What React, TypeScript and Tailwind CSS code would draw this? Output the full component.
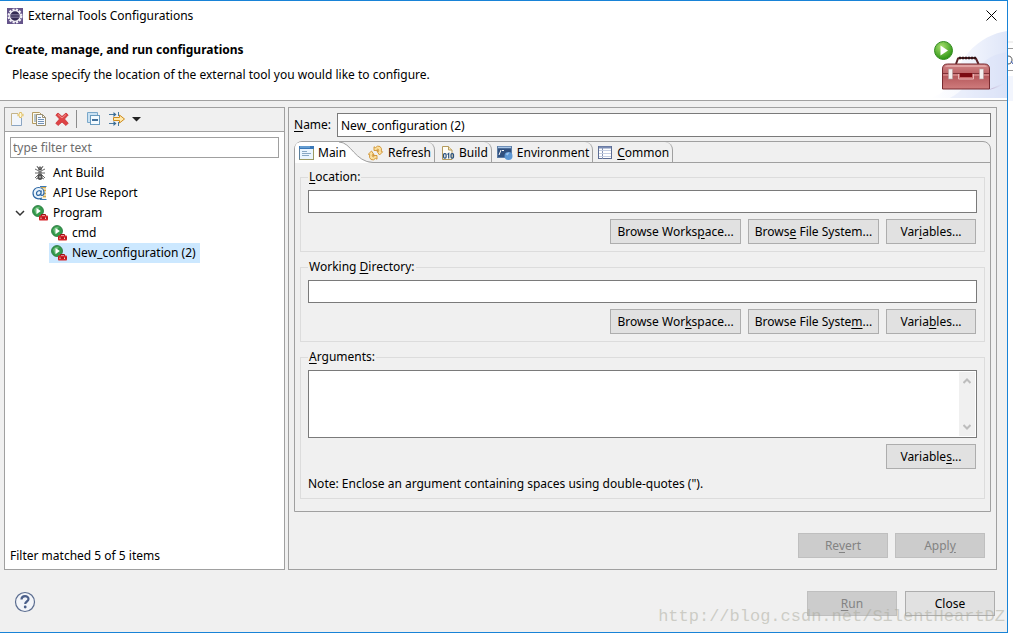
import { useState } from "react";
import type { ReactNode } from "react";

type TreeItem = {
  id: string;
  label: string;
  icon: ReactNode;
  level: number;
  expanded?: boolean;
};

const treeItems: TreeItem[] = [
  { id: "ant", label: "Ant Build", icon: <AntIcon />, level: 0 },
  { id: "api", label: "API Use Report", icon: <ApiIcon />, level: 0 },
  { id: "program", label: "Program", icon: <ProgramIcon />, level: 0, expanded: true },
  { id: "cmd", label: "cmd", icon: <ProgramIcon />, level: 1 },
  { id: "new", label: "New_configuration (2)", icon: <ProgramIcon />, level: 1 },
];

export default function App() {
  return (
    <div className="relative flex min-h-screen bg-white pb-0.5 font-['Noto_Sans','Noto_Sans_CJK_SC',sans-serif] text-[12px] leading-4 text-black">
      <main className="flex min-w-0 flex-1 flex-col border-y border-r border-[#1883d7] bg-[#f0f0f0]">
        <DialogHeader />
        <div className="flex flex-1 gap-[3px] pt-1.5 pr-2.5 pl-1">
          <ConfigurationList />
          <ConfigurationEditor />
        </div>
        <footer className="flex h-[62px] items-start justify-between pt-[21px] pr-3 pl-3.5">
          <button aria-label="Help">
            <HelpIcon />
          </button>
          <div className="flex gap-2">
            <PushButton disabled>
              <Key>R</Key>un
            </PushButton>
            <PushButton>Close</PushButton>
          </div>
        </footer>
      </main>
      <WindowBehind />
      <div className="pointer-events-none absolute right-2 bottom-2 font-['Liberation_Mono',monospace] text-[17px] leading-5 text-[#a8a89a]/50">
        http://blog.csdn.net/SilentHeartDZ
      </div>
    </div>
  );
}

function DialogHeader() {
  return (
    <header className="flex items-stretch justify-between border-b border-[#a0a0a0] bg-white">
      <div>
        <div className="flex items-center gap-[5px] pt-1.5 pl-[7px]">
          <EclipseIcon />
          <span className="pt-px">External Tools Configurations</span>
        </div>
        <h1 className="pt-[18px] pl-[5px] font-bold">Create, manage, and run configurations</h1>
        <p className="pt-[9px] pb-[17px] pl-3">
          Please specify the location of the external tool you would like to configure.
        </p>
      </div>
      <div className="flex flex-col items-end">
        <button aria-label="Close window" className="px-2.5 pt-[9px] pb-2">
          <svg width="11" height="11" viewBox="0 0 11 11" stroke="#000" fill="none">
            <path d="M.5.5l10 10M10.5.5l-10 10" />
          </svg>
        </button>
        <BannerIcon />
      </div>
    </header>
  );
}

function ConfigurationList() {
  const [selected, setSelected] = useState("new");

  return (
    <section className="flex w-[281px] shrink-0 flex-col border border-[#a0a0a0] bg-white">
      <div className="flex h-6 items-center border-b border-[#a0a0a0] bg-[#f0f0f0] pb-px pl-1">
        <button aria-label="New" className="mr-1.5"><NewIcon /></button>
        <button aria-label="Duplicate" className="mr-[7px]"><DuplicateIcon /></button>
        <button aria-label="Delete"><DeleteIcon /></button>
        <span className="mr-[5px] ml-1.5 h-[18px] w-px bg-[#8c8c8c]" />
        <button aria-label="Collapse all" className="mr-1.5 ml-1"><CollapseIcon /></button>
        <button aria-label="Filter" className="mr-1.5"><FilterIcon /></button>
        <button aria-label="Filter menu">
          <svg width="9" height="5" viewBox="0 0 9 5"><path d="M0 0h9L4.500 4.500z" fill="#222" /></svg>
        </button>
      </div>
      <input
        type="text"
        aria-label="Filter"
        placeholder="type filter text"
        className="mx-[5px] mt-[5px] h-[21px] border border-[#a0a0a0] px-0.5 outline-none placeholder:text-[#6d6d6d]"
      />
      <ul role="tree" className="mt-[5px] flex-1">
        {treeItems.map((item) => (
          <li
            key={item.id}
            role="treeitem"
            aria-selected={selected === item.id}
            className={item.level === 0 ? "flex h-5 pl-[9px]" : "flex h-5 pl-7"}
          >
            <span className="flex w-4 items-center">
              {item.expanded && (
                <svg width="12" height="7" viewBox="0 0 12 7" fill="none" stroke="#333" strokeWidth="1.5">
                  <path d="M2 1l4 4 4-4" />
                </svg>
              )}
            </span>
            <button
              onClick={() => setSelected(item.id)}
              className={`flex h-5 items-center gap-[5px] px-0.5 pr-1 ${selected === item.id ? "bg-[#cce8ff]" : ""}`}
            >
              {item.icon}
              {item.label}
            </button>
          </li>
        ))}
      </ul>
      <p className="pb-[5px] pl-[5px]">Filter matched 5 of 5 items</p>
    </section>
  );
}

function ConfigurationEditor() {
  return (
    <section className="flex min-w-0 flex-1 flex-col border border-[#a0a0a0] p-[5px]">
      <div className="flex items-center gap-1">
        <label htmlFor="name" className="w-[39px]">
          <Key>N</Key>ame:
        </label>
        <input
          id="name"
          type="text"
          defaultValue="New_configuration (2)"
          className="h-6 min-w-0 flex-1 border border-[#7a7a7a] bg-white px-[3px] outline-none"
        />
      </div>

      <div className="mt-1 rounded-t-lg border border-[#a0a0a0]">
        <TabStrip />
        <div className="flex flex-col gap-[7px] px-[5px] pt-1.5 pb-3">
          <PathGroup id="location" label={<><Key>L</Key>ocation:</>}>
            <PushButton wide>Browse Works<Key>p</Key>ace...</PushButton>
            <PushButton wide>Brows<Key>e</Key> File System...</PushButton>
            <PushButton>Var<Key>i</Key>ables...</PushButton>
          </PathGroup>
          <PathGroup id="directory" label={<>Working <Key>D</Key>irectory:</>}>
            <PushButton wide>Browse Wor<Key>k</Key>space...</PushButton>
            <PushButton wide>Browse File Syste<Key>m</Key>...</PushButton>
            <PushButton>Varia<Key>b</Key>les...</PushButton>
          </PathGroup>
          <fieldset className="border border-[#dcdcdc] px-[7px] pb-1.5">
            <legend className="px-px">
              <label htmlFor="arguments"><Key>A</Key>rguments:</label>
            </legend>
            <div className="mt-[5px] flex h-[68px] border border-[#7a7a7a] bg-white">
              <textarea id="arguments" className="min-w-0 flex-1 resize-none px-1 outline-none" />
              <div className="my-px mr-px flex w-4 flex-col items-center justify-between bg-[#f0f0f0] py-1.5">
                <svg width="8" height="6" viewBox="0 0 8 6" fill="none" stroke="#bdbdbd" strokeWidth="2">
                  <path d="M.5 5L4 1.500 7.500 5" />
                </svg>
                <svg width="8" height="6" viewBox="0 0 8 6" fill="none" stroke="#bdbdbd" strokeWidth="2">
                  <path d="M.5 1L4 4.500 7.500 1" />
                </svg>
              </div>
            </div>
            <div className="mt-1.5 flex justify-end pr-px">
              <PushButton>Variable<Key>s</Key>...</PushButton>
            </div>
            <p className="mt-[7px]">Note: Enclose an argument containing spaces using double-quotes (&quot;).</p>
          </fieldset>
        </div>
      </div>

      <div className="mt-auto flex justify-end gap-[7px] pr-1.5 pb-1.5">
        <PushButton disabled>Re<Key>v</Key>ert</PushButton>
        <PushButton disabled>Appl<Key>y</Key></PushButton>
      </div>
    </section>
  );
}

function TabStrip() {
  return (
    <div role="tablist" className="flex h-[21px]">
      <button role="tab" aria-selected="true" className="relative z-10 flex w-[73px] shrink-0 items-center gap-[3px] pl-1">
        <svg className="pointer-events-none absolute top-0 left-0" width="84" height="21" viewBox="0 0 84 21">
          <path d="M0 21V6Q0 0 7 0H44C56 0 60 20 77 20.500H84V21z" fill="#fff" />
          <path d="M44 0C56 0 60 20 78 20.500H84" fill="none" stroke="#a0a0a0" />
        </svg>
        <span className="relative"><MainIcon /></span>
        <span className="relative">Main</span>
      </button>
      <div className="flex flex-1 border-b border-[#a0a0a0]">
        <Tab icon={<RefreshIcon />}>Refresh</Tab>
        <Tab icon={<BuildIcon />} inset>Build</Tab>
        <Tab icon={<EnvironmentIcon />} inset>Environment</Tab>
        <Tab icon={<CommonIcon />} inset><Key>C</Key>ommon</Tab>
      </div>
    </div>
  );
}

function Tab({ icon, inset, children }: { icon: ReactNode; inset?: boolean; children: ReactNode }) {
  return (
    <button
      role="tab"
      aria-selected="false"
      className={`flex items-center gap-1 rounded-tr-lg border-r border-[#a0a0a0] pt-px pr-[3px] ${inset ? "pl-[5px]" : ""}`}
    >
      {icon}
      <span>{children}</span>
    </button>
  );
}

function PathGroup({ id, label, children }: { id: string; label: ReactNode; children: ReactNode }) {
  return (
    <fieldset className="min-w-0 border border-[#dcdcdc] px-[7px] pb-[7px]">
      <legend className="px-px">
        <label htmlFor={id}>{label}</label>
      </legend>
      <input
        id={id}
        type="text"
        className="mt-[5px] block h-[23px] w-full border border-[#7a7a7a] bg-white px-1 outline-none"
      />
      <div className="mt-1.5 flex justify-end gap-[7px] pr-px">{children}</div>
    </fieldset>
  );
}

function PushButton({ disabled, wide, children }: { disabled?: boolean; wide?: boolean; children: ReactNode }) {
  return (
    <button
      disabled={disabled}
      className={`h-[25px] border whitespace-nowrap ${wide ? "w-[131px]" : "w-[90px]"} ${
        disabled ? "border-[#bfbfbf] bg-[#cccccc] text-[#838383]" : "border-[#adadad] bg-[#e1e1e1]"
      }`}
    >
      {children}
    </button>
  );
}

// Mnemonic letter
function Key({ children }: { children: ReactNode }) {
  return <u className="underline-offset-2">{children}</u>;
}

// Sliver of the workbench window to the right of the dialog
function WindowBehind() {
  return (
    <div className="w-[5px] shrink-0 overflow-hidden pt-[41px]">
      <div className="h-[7px] border-t-2 border-[#f0f0f0]" />
      <div className="h-[23px] border-y border-[#9a9a9a] pt-1.5">
        <svg width="5" height="10" viewBox="0 0 5 10" fill="none">
          <path d="M0 1c3 0 4 2 4 4s-1 4-4 4" stroke="#555" />
          <path d="M3 6l2 3" stroke="#4263b8" />
        </svg>
      </div>
      <div className="mt-[5px] h-[25px] bg-[#f2f5fd]" />
    </div>
  );
}

function EclipseIcon() {
  return (
    <svg width="16" height="16" viewBox="0 0 16 16">
      <rect width="16" height="16" fill="#64548a" />
      <circle cx="8" cy="8" r="6.300" fill="none" stroke="#f3f1f7" strokeWidth="2.400" strokeDasharray="2.100 1.200" />
      <circle cx="8" cy="8" r="5.300" fill="#332b54" stroke="#f3f1f7" strokeWidth="1.200" />
      <path d="M3.500 6.500h9M3 8h10M3.500 9.500h9" stroke="#8a83a4" strokeWidth=".7" />
    </svg>
  );
}

function BannerIcon() {
  return (
    <svg width="77" height="69" viewBox="0 0 77 69">
      <defs>
        <linearGradient id="swoosh" x1="0" x2="1" y1="0" y2="0">
          <stop offset="0" stopColor="#fff" />
          <stop offset=".4" stopColor="#f6f8fe" />
          <stop offset="1" stopColor="#dfe6f8" />
        </linearGradient>
        <linearGradient id="box" x1="0" x2="0" y1="0" y2="1">
          <stop offset="0" stopColor="#d08586" />
          <stop offset=".5" stopColor="#b75a5d" />
          <stop offset="1" stopColor="#cf7c7d" />
        </linearGradient>
        <linearGradient id="shade" x1="0" x2="1" y1="0" y2="0">
          <stop offset="0" stopColor="#b9a5c6" />
          <stop offset="1" stopColor="#dfe6f8" stopOpacity="0" />
        </linearGradient>
        <radialGradient id="play" cx=".4" cy=".3" r=".7">
          <stop offset="0" stopColor="#a9e06f" />
          <stop offset="1" stopColor="#2c9414" />
        </radialGradient>
      </defs>
      <path d="M0 69C22 64 22 42 38 24 50 10 64 4 77 2v67z" fill="url(#swoosh)" />
      <path d="M20 69C45 57 42 28 77 23v46z" fill="#d5def5" opacity=".35" />
      <path d="M58 61L76 53Q70 59 58 61z" fill="url(#shade)" />
      <path d="M26 35l2-5.500Q28.500 29 30 29h14q1.500 0 2 .500L48.500 35" fill="none" stroke="#5a2226" strokeWidth="2" />
      <path d="M29 29h17" stroke="#2b1416" strokeWidth="2.500" strokeDasharray="2 1" />
      <path d="M12.500 44v-4q0-5 5-5h37q5 0 5 5v20h-47z" fill="url(#box)" stroke="#772b30" />
      <path d="M15 38q1-2 3-2h36q2 0 3 2z" fill="#e5abab" opacity=".8" />
      <path d="M13 44.500h46" stroke="#803238" />
      <path d="M13 46h46" stroke="#e29b9b" />
      <path d="M28.500 45v5h15v-5" fill="#c76769" stroke="#e8b5b5" />
      <path d="M30 44h12v4H30z" fill="#7c0b12" />
      <g fill="#f4f0ef" stroke="#b69b9b" strokeWidth=".6">
        <rect x="18.500" y="40" width="4" height="10" />
        <rect x="49.500" y="40" width="4" height="10" />
      </g>
      <circle cx="13.500" cy="21.500" r="9" fill="url(#play)" stroke="#348c22" />
      <path d="M10.500 16.500v10l7.500-5z" fill="#fff" />
    </svg>
  );
}

function NewIcon() {
  return (
    <svg width="16" height="16" viewBox="0 0 16 16">
      <path d="M2.500 2.500h8l2 3v9h-10z" fill="#f2f6fc" />
      <path d="M9 2.500H2.500v12" fill="none" stroke="#c5b48a" />
      <path d="M2.500 14.500h10V7" fill="none" stroke="#8ba5c2" />
      <path d="M11.500 1v6M8.500 4h6" stroke="#dfbd62" strokeWidth="2.400" />
      <path d="M11.500 2v4M9.500 4h4" stroke="#fff9db" />
    </svg>
  );
}

function DuplicateIcon() {
  return (
    <svg width="16" height="16" viewBox="0 0 16 16">
      <path d="M1.500 1.500h7l2 2v9h-9z" fill="#fffbe9" stroke="#b39a62" />
      <path d="M3 4h3M3 6h3M3 8h3M3 10h3" stroke="#6f8dae" />
      <path d="M5.500 3.500h6l3 3v8h-9z" fill="#f7faff" stroke="#9a8f70" />
      <path d="M11.500 3.500v3h3" fill="none" stroke="#9a8f70" />
      <path d="M7 6.500h3M7 8.500h6M7 10.500h6M7 12.500h6" stroke="#7292b5" />
    </svg>
  );
}

function DeleteIcon() {
  return (
    <svg width="16" height="16" viewBox="0 0 16 16">
      <path d="M4 2L8 5.500 12 2l2.200 2-3.700 4 3.700 4.200-2.200 2.300L8 11l-4 3.500-2.200-2.300L5.500 8 1.800 4z" fill="#df4345" stroke="#c93236" strokeWidth=".8" />
      <path d="M4 3.500L8 7l4-3.500" fill="none" stroke="#f1918f" />
    </svg>
  );
}

function CollapseIcon() {
  return (
    <svg width="16" height="16" viewBox="0 0 16 16">
      <path d="M1.500 11.500v-10h10v3h-7v7z" fill="#c9e1f2" stroke="#7aa8ca" />
      <rect x="4.500" y="4.500" width="9" height="9" fill="#f4fbff" stroke="#6a9bbf" />
      <path d="M6 9h6" stroke="#174f84" strokeWidth="1.600" />
    </svg>
  );
}

function FilterIcon() {
  return (
    <svg width="18" height="16" viewBox="0 0 18 16">
      <path d="M1 3.500h6M1 12.500h6M10.500 1v4M10.500 11v4" stroke="#4b7a9f" />
      <path d="M5.500 1l3 2.500-3 2.500zM5.500 10l3 2.500-3 2.500z" fill="#376b96" />
      <path d="M5.500 6.500h6V4l5 4-5 4V9.500h-6z" fill="#ffe9ad" stroke="#ce8b1d" />
    </svg>
  );
}

function AntIcon() {
  return (
    <svg width="16" height="16" viewBox="0 0 16 16">
      <path d="M6 3L5 1M10 3l1-2M7 6L3 4M9 6l4-2M7 8H3M9 8h4M7 9l-4 4M9 9l4 4M6 13l-2 1M10 13l2 1" stroke="#686868" />
      <circle cx="8" cy="3.500" r="2" fill="#4b4b4b" />
      <ellipse cx="8" cy="7.500" rx="1.800" ry="2" fill="#777" />
      <ellipse cx="8" cy="12" rx="2.500" ry="3" fill="#515151" />
      <path d="M7 12h2M7.500 3h1" stroke="#ddd" />
    </svg>
  );
}

function ApiIcon() {
  return (
    <svg width="16" height="16" viewBox="0 0 16 16">
      <path d="M9 2.500h5v11H9z" fill="#f7edc9" />
      <path d="M9 2.500h5M11 5.500h3M12 8.500h2M11 11.500h3" stroke="#d2a84c" strokeWidth="1.600" />
      <path d="M8 1.500h6.500M8 14.500h6.500" stroke="#3c79b5" />
      <circle cx="6.500" cy="8" r="5.500" fill="#e9f3fb" />
      <path d="M10 13c-4 2-9 0-9-5 0-3 2.500-5.500 5.500-5.500S12 4.500 12 7.500c0 2-1 3-2.200 3C8.500 10.500 9 9 9.300 5.500M9 7.500c0-3-4.500-2-4.500 1 0 2.600 3.700 2.300 4.300 0" fill="none" stroke="#2d67a4" strokeWidth="1.200" />
    </svg>
  );
}

function ProgramIcon() {
  return (
    <svg width="16" height="16" viewBox="0 0 16 16">
      <circle cx="6" cy="6" r="5.500" fill="#349a4b" stroke="#26743c" strokeWidth=".8" />
      <path d="M2 4.500Q4 1 8 1.800L4 9z" fill="#8ace95" opacity=".6" />
      <path d="M4.500 3v6.200L8.800 6z" fill="#fff" />
      <path d="M9.500 11v-1.500h4V11" fill="none" stroke="#9e1015" />
      <rect x="7" y="10.500" width="9" height="5" rx=".8" fill="#d8242a" />
      <path d="M7 13h9" stroke="#970e14" />
      <path d="M9 12.500v1.500M13.500 12.500v1.500" stroke="#ffc9c4" />
    </svg>
  );
}

function MainIcon() {
  return (
    <svg width="16" height="16" viewBox="0 0 16 16">
      <rect x=".5" y="1.500" width="14" height="13" fill="#eaf5ff" stroke="#5b7f9b" />
      <path d="M14.500 4v10.500H.5" fill="none" stroke="#9b9a62" />
      <path d="M0 1h15v3H0z" fill="#3a78b8" />
      <path d="M1 2h10" stroke="#8fc1ea" />
      <path d="M3 6.500h5M3 8.500h9M3 10.500h7" stroke="#88a8c4" />
    </svg>
  );
}

function RefreshIcon() {
  return (
    <svg width="16" height="16" viewBox="0 0 16 16">
      <g fill="#fbe0a0" stroke="#cf9230" strokeWidth=".9" strokeLinejoin="round">
        <path d="M6 5.500V1.800l1.500.8Q9.500.2 12 1.500q2.300 1.800 1.300 5l1.400.3L11.500 10 9 6.300l1.500.2q.6-1.500-.2-2.200-.7-.4-1.300.2l1 1z" />
        <path d="M9 10.500v3.700l-1.500-.8q-2 2.400-4.500 1.100-2.300-1.800-1.300-5L.3 9.200 3.500 6 6 9.700l-1.500-.2q-.6 1.500.2 2.200.7.4 1.300-.2l-1-1z" />
      </g>
    </svg>
  );
}

function BuildIcon() {
  return (
    <svg width="15" height="16" viewBox="0 0 15 16">
      <path d="M2.500 1.500h6l3.500 3.500v9.500H2.500z" fill="#fffdf4" stroke="#b49b5e" />
      <path d="M8.500 1.500V5H12" fill="#f6e4b1" stroke="#b49b5e" />
      <g fill="none" stroke="#27507f" strokeWidth="1.200">
        <rect x="3.600" y="8.600" width="2.500" height="4.500" rx="1" />
        <path d="M7.500 9.500l1.200-1v5" />
        <rect x="11" y="8.600" width="2.500" height="4.500" rx="1" />
      </g>
    </svg>
  );
}

function EnvironmentIcon() {
  return (
    <svg width="16" height="16" viewBox="0 0 16 16">
      <rect x=".5" y="1.500" width="14" height="11" fill="#31517f" stroke="#5c7da6" />
      <path d="M1 2.500h13" stroke="#a9c7e8" strokeWidth="1.500" />
      <path d="M2 10l2-5M5 5.500h2" stroke="#fff" />
      <circle cx="11.500" cy="11" r="4" fill="#5c97d4" />
      <path d="M8.500 9q2-2 4-1.500l-2 3z" fill="#9fc6ee" />
    </svg>
  );
}

function CommonIcon() {
  return (
    <svg width="15" height="16" viewBox="0 0 15 16">
      <rect x=".5" y="1.500" width="13" height="12" fill="#fff" stroke="#5c6c93" />
      <path d="M1 2.500h12" stroke="#7b8db5" strokeWidth="2" />
      <path d="M4.500 2v12" stroke="#8593b3" />
      <path d="M1 5.500h12M1 8.500h12M1 11.500h12" stroke="#c5cfe3" />
    </svg>
  );
}

function HelpIcon() {
  return (
    <svg width="22" height="22" viewBox="0 0 22 22" fill="none">
      <circle cx="11" cy="11" r="9.500" fill="#f3f5f9" stroke="#5b6d90" strokeWidth="1.200" />
      <path d="M7.500 8.500C7.500 4 14.500 4 14.500 8c0 2.500-3.300 2.500-3.300 5" stroke="#4c608a" strokeWidth="2.200" />
      <circle cx="11.200" cy="16" r="1.400" fill="#4c608a" />
    </svg>
  );
}
